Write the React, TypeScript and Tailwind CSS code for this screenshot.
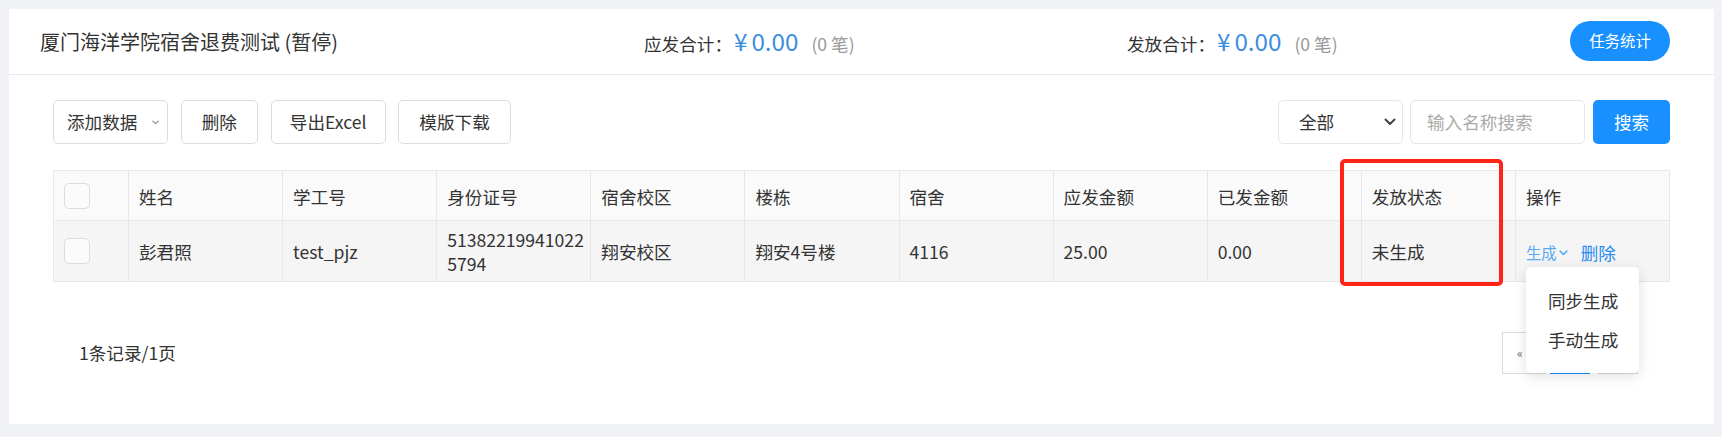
import React from "react";

const headers = ["姓名", "学工号", "身份证号", "宿舍校区", "楼栋", "宿舍", "应发金额", "已发金额", "发放状态", "操作"];

function Chevron({ className }: { className?: string }) {
  return (
    <svg className={className} viewBox="0 0 12 8" fill="none" stroke="currentColor" strokeWidth="2" strokeLinecap="round" strokeLinejoin="round">
      <polyline points="1.5,1.5 6,6 10.5,1.5" />
    </svg>
  );
}

function Checkbox() {
  return <div className="w-[26px] h-[26px] rounded-[5px] border border-[#dcdcdc] bg-[#fbfbfb]" />;
}

function Total({ label }: { label: string }) {
  return (
    <div className="flex items-baseline">
      <span className="text-[17.6px]">{label}</span>
      <span className="text-[24.2px] text-[#3b8de0] ml-[2px]">¥</span>
      <span className="text-[24.2px] text-[#3b8de0] ml-[4px]">0.00</span>
      <span className="text-[17.6px] text-[#999] ml-[13px]">(0 笔)</span>
    </div>
  );
}

export default function App() {
  return (
    <div className="min-h-[437px] bg-[#f0f2f5] pt-[9px] pl-[9px] pr-[8px] pb-[13px] font-['Noto_Sans_CJK_SC','Noto_Sans',sans-serif] text-[#333]">
      <div className="bg-white h-[415px]">
        {/* header */}
        <div className="h-[66px] border-b border-[#e8e8e8] flex items-center pl-[31px] pr-[44px]">
          <div className="w-[604px] text-[20px] leading-[28px] text-[#333]">厦门海洋学院宿舍退费测试 (暂停)</div>
          <div className="w-[483px]">
            <Total label="应发合计：" />
          </div>
          <div className="flex-1">
            <Total label="发放合计：" />
          </div>
          <button className="w-[100px] h-[40px] rounded-full bg-[#1890ff] text-white text-[15.4px] mt-[-1px]">任务统计</button>
        </div>

        {/* content */}
        <div className="px-[44px] pt-[25px]">
          <div className="flex justify-between h-[44px]">
            <div className="flex gap-[12.5px]">
              <button className="w-[115px] h-[44px] border border-[#dcdcdc] rounded-[5px] flex items-center pl-[13px] text-[17.6px]">
                <span>添加数据</span>
                <Chevron className="w-[7px] h-[5px] ml-[15px] text-[#888]" />
              </button>
              <button className="w-[77.5px] h-[44px] border border-[#dcdcdc] rounded-[5px] text-[17.6px]">删除</button>
              <button className="w-[115.3px] h-[44px] border border-[#dcdcdc] rounded-[5px] text-[17.6px]">导出Excel</button>
              <button className="w-[112.5px] h-[44px] border border-[#dcdcdc] rounded-[5px] text-[17.6px]">模版下载</button>
            </div>
            <div className="flex">
              <div className="w-[125px] h-[44px] border border-[#e6e6e6] rounded-[5px] flex items-center justify-between pl-[20px] pr-[6px] text-[17.6px]">
                <span>全部</span>
                <Chevron className="w-[12px] h-[8px] text-[#444]" />
              </div>
              <div className="w-[175px] h-[44px] ml-[7px] border border-[#e6e6e6] rounded-[5px] flex items-center pl-[16px] text-[17.6px] text-[#aaa]">
                输入名称搜索
              </div>
              <button className="w-[77px] h-[44px] ml-[8px] rounded-[5px] bg-[#1890ff] text-white text-[17.6px]">搜索</button>
            </div>
          </div>

          {/* table */}
          <div className="relative mt-[26px]">
            <div className="w-[1617px] border-l border-t border-[#e8e8e8] grid grid-cols-[75px_repeat(10,minmax(0,1fr))] text-[17.6px]">
              <div className="h-[50px] bg-[#fafafa] border-r border-b border-[#e8e8e8] flex items-center pl-[10px]">
                <Checkbox />
              </div>
              {headers.map((h) => (
                <div key={h} className="h-[50px] bg-[#fafafa] border-r border-b border-[#e8e8e8] flex items-center pl-[10px] pt-[3px]">
                  {h}
                </div>
              ))}
              <div className="h-[61px] bg-[#f5f5f5] border-r border-b border-[#e8e8e8] flex items-center pl-[10px]">
                <Checkbox />
              </div>
              <div className="h-[61px] bg-[#f5f5f5] border-r border-b border-[#e8e8e8] flex items-center pl-[10px] pt-[2px]">彭君照</div>
              <div className="h-[61px] bg-[#f5f5f5] border-r border-b border-[#e8e8e8] flex items-center pl-[10px] pt-[2px]">test_pjz</div>
              <div className="h-[61px] bg-[#f5f5f5] border-r border-b border-[#e8e8e8] flex items-center pl-[10px] pt-[2px] leading-[24.5px] whitespace-nowrap">
                <div>
                  51382219941022
                  <br />
                  5794
                </div>
              </div>
              <div className="h-[61px] bg-[#f5f5f5] border-r border-b border-[#e8e8e8] flex items-center pl-[10px] pt-[2px]">翔安校区</div>
              <div className="h-[61px] bg-[#f5f5f5] border-r border-b border-[#e8e8e8] flex items-center pl-[10px] pt-[2px]">翔安4号楼</div>
              <div className="h-[61px] bg-[#f5f5f5] border-r border-b border-[#e8e8e8] flex items-center pl-[10px] pt-[2px]">4116</div>
              <div className="h-[61px] bg-[#f5f5f5] border-r border-b border-[#e8e8e8] flex items-center pl-[10px] pt-[2px]">25.00</div>
              <div className="h-[61px] bg-[#f5f5f5] border-r border-b border-[#e8e8e8] flex items-center pl-[10px] pt-[2px]">0.00</div>
              <div className="h-[61px] bg-[#f5f5f5] border-r border-b border-[#e8e8e8] flex items-center pl-[10px] pt-[2px]">未生成</div>
              <div className="relative h-[61px] bg-[#f5f5f5] border-r border-b border-[#e8e8e8] flex items-center pl-[10px] pt-[4px]">
                <span className="flex items-center text-[15.4px] text-[#5aa9f5]">
                  生成
                  <Chevron className="w-[9px] h-[6px] ml-[2px]" />
                </span>
                <span className="ml-[13px] text-[#2b8cf0]">删除</span>
                <div className="absolute z-20 left-[10px] top-[46px] w-[113px] h-[106px] bg-white rounded-[5px] shadow-[0_3px_14px_rgba(0,0,0,0.13)] pt-[15px] pl-[22px]">
                  <div className="h-[39px] flex items-center">同步生成</div>
                  <div className="h-[39px] flex items-center">手动生成</div>
                </div>
              </div>
            </div>
            {/* annotation */}
            <div className="absolute z-10 left-[1287px] top-[-11px] w-[163px] h-[127px] border-[4px] border-[#ff2418] rounded-[5px] pointer-events-none" />
          </div>

          {/* footer */}
          <div className="mt-[50px] h-[42px] flex items-center justify-between pl-[26px] pr-[32px] text-[17.6px]">
            <span>1条记录/1页</span>
            <div className="flex h-[42px]">
              <div className="w-[44px] h-[42px] border border-[#dcdcdc] flex items-center pl-[14px] text-[12px] text-[#666]">«</div>
              <div className="w-[40px] h-[42px] ml-[4px] bg-[#1890ff] text-white flex items-center justify-center">1</div>
              <div className="w-[40px] h-[42px] ml-[8px] border border-[#dcdcdc] flex items-center justify-center text-[12px] text-[#666]">»</div>
            </div>
          </div>
        </div>
      </div>
    </div>
  );
}
